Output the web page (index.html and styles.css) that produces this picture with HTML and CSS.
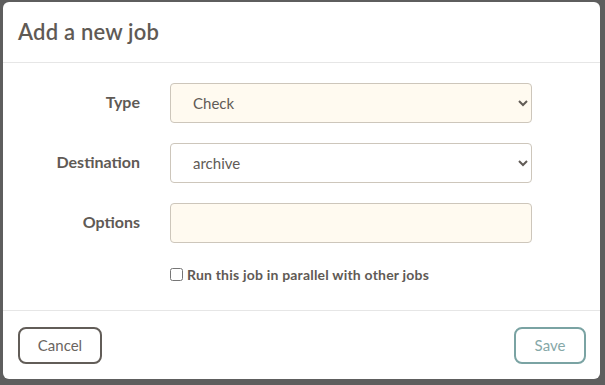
FILE: index.html
```html
<!DOCTYPE html>
<html lang="en">
<head>
    <meta charset="UTF-8">
    <meta name="viewport" content="width=device-width, initial-scale=1.0">
    <title>Add a new job</title>
    <link rel="stylesheet" href="styles.css">
</head>
<body>
    <div class="modal">
        <div class="modal-header">
            <h1>Add a new job</h1>
        </div>
        <div class="modal-body">
            <div class="form-row">
                <label for="type">Type</label>
                <select id="type" class="field">
                    <option>Check</option>
                    <option>Backup</option>
                    <option>Prune</option>
                </select>
            </div>
            <div class="form-row">
                <label for="destination">Destination</label>
                <select id="destination" class="field field-white">
                    <option>archive</option>
                </select>
            </div>
            <div class="form-row">
                <label for="options">Options</label>
                <input type="text" id="options" class="field">
            </div>
            <div class="check-row">
                <input type="checkbox" id="parallel">
                <label for="parallel">Run this job in parallel with other jobs</label>
            </div>
        </div>
        <div class="modal-footer">
            <button class="btn btn-cancel">Cancel</button>
            <button class="btn btn-save">Save</button>
        </div>
    </div>
</body>
</html>
```

FILE: styles.css
```css
body {
    margin: 0;
    padding: 2px 5px 6px 3px;
    background: #5e5e5e;
    font-family: "Lato", "Open Sans", sans-serif;
    color: #5f5a55;
}

.modal {
    width: 597px;
    height: 377px;
    background: #fff;
    border-radius: 6px;
    display: flex;
    flex-direction: column;
}

.modal-header {
    height: 60px;
    padding: 0 15px;
    display: flex;
    align-items: center;
    border-bottom: 1px solid #e6e6e6;
}

.modal-header h1 {
    margin: 0 0 2px;
    font-size: 22px;
    font-weight: 600;
    letter-spacing: 0.2px;
    color: #5f5a55;
}

.modal-body {
    flex: 1;
    padding: 20px 0 0;
    display: flex;
    flex-direction: column;
    gap: 20px;
}

.form-row {
    display: flex;
    align-items: center;
    gap: 30px;
}

.form-row label {
    width: 137px;
    padding-bottom: 3px;
    text-align: right;
    font-size: 16px;
    font-weight: 700;
}

.field {
    box-sizing: border-box;
    width: 362px;
    height: 40px;
    margin: 0;
    padding: 0 8px 0 18px;
    border: 1px solid #cdc6bb;
    border-radius: 4px;
    background-color: #fffaf0;
    font-family: inherit;
    font-size: 15px;
    color: #615b56;
}

.field-white {
    background-color: #fff;
}

.check-row {
    display: flex;
    align-items: center;
    gap: 4px;
    padding-left: 167px;
    margin-top: 3px;
    font-size: 14px;
    font-weight: 700;
    letter-spacing: 0.2px;
}

.check-row input {
    width: 13px;
    height: 13px;
    margin: 0;
}

.modal-footer {
    height: 68px;
    padding: 0 14px 0 15px;
    display: flex;
    align-items: center;
    justify-content: space-between;
    border-top: 1px solid #e6e6e6;
}

.btn {
    height: 37px;
    padding: 0;
    background: #fff;
    border-radius: 8px;
    font-family: inherit;
    font-size: 15px;
    cursor: pointer;
}

.btn-cancel {
    width: 84px;
    border: 2px solid #625d58;
    color: #6a6560;
}

.btn-save {
    width: 72px;
    border: 2px solid #7aa3a3;
    color: #86a8a8;
}
```
